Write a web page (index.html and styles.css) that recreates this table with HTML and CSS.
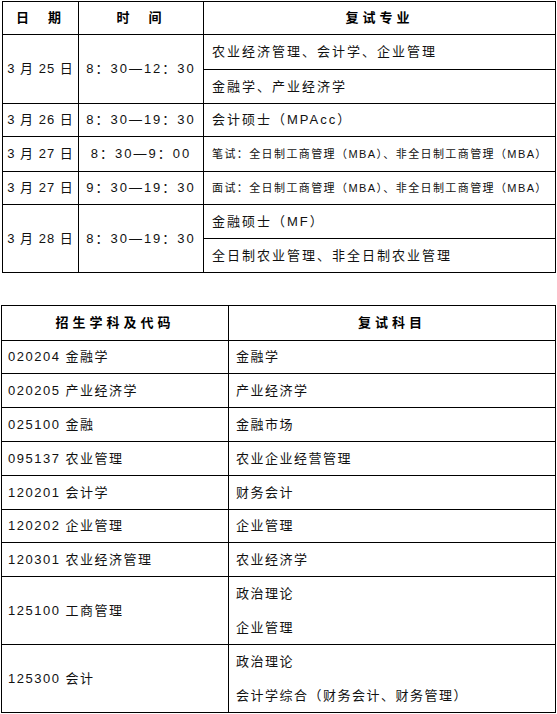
FILE: index.html
```html
<!DOCTYPE html>
<html lang="zh-CN">
<head>
<meta charset="utf-8">
<title>复试安排</title>
<link rel="stylesheet" href="styles.css">
</head>
<body>
<table class="tbl sched">
  <colgroup><col class="c-date"><col class="c-time"><col class="c-major"></colgroup>
  <tr class="head h33"><th>日&nbsp;&nbsp;期</th><th>时&nbsp;&nbsp;间</th><th>复试专业</th></tr>
  <tr class="h35"><td rowspan="2" class="ctr date">3 月 25 日</td><td rowspan="2" class="ctr">8：30—12：30</td><td>农业经济管理、会计学、企业管理</td></tr>
  <tr class="h34"><td>金融学、产业经济学</td></tr>
  <tr class="h33"><td class="ctr date">3 月 26 日</td><td class="ctr">8：30—19：30</td><td>会计硕士（MPAcc）</td></tr>
  <tr class="h35"><td class="ctr date">3 月 27 日</td><td class="ctr">8：30—9：00</td><td class="small">笔试：全日制工商管理（MBA）、非全日制工商管理（MBA）</td></tr>
  <tr class="h33"><td class="ctr date">3 月 27 日</td><td class="ctr">9：30—19：30</td><td class="small">面试：全日制工商管理（MBA）、非全日制工商管理（MBA）</td></tr>
  <tr class="h34"><td rowspan="2" class="ctr date">3 月 28 日</td><td rowspan="2" class="ctr">8：30—19：30</td><td>金融硕士（MF）</td></tr>
  <tr class="h34"><td>全日制农业管理、非全日制农业管理</td></tr>
</table>

<table class="tbl subj">
  <colgroup><col class="c-code"><col class="c-exam"></colgroup>
  <tr class="head h35"><th>招生学科及代码</th><th>复试科目</th></tr>
  <tr class="h33"><td>020204 金融学</td><td>金融学</td></tr>
  <tr class="h34"><td>020205 产业经济学</td><td>产业经济学</td></tr>
  <tr class="h34"><td>025100 金融</td><td>金融市场</td></tr>
  <tr class="h34"><td>095137 农业管理</td><td>农业企业经营管理</td></tr>
  <tr class="h34"><td>120201 会计学</td><td>财务会计</td></tr>
  <tr class="h33"><td>120202 企业管理</td><td>企业管理</td></tr>
  <tr class="h34"><td>120301 农业经济管理</td><td>农业经济学</td></tr>
  <tr class="h67"><td>125100 工商管理</td><td class="multi">政治理论<br>企业管理</td></tr>
  <tr class="h68"><td>125300 会计</td><td class="multi">政治理论<br>会计学综合（财务会计、财务管理）</td></tr>
</table>
</body>
</html>
```

FILE: styles.css
```css
html, body {
  margin: 0;
  padding: 0;
  background: #fff;
}

body {
  font-family: "Liberation Sans", "Noto Sans CJK SC", sans-serif;
  font-size: 13px;
  color: #111;
}

.tbl {
  border-collapse: collapse;
  table-layout: fixed;
}

.tbl th,
.tbl td {
  border: 1px solid #000;
  padding: 0;
  vertical-align: middle;
  white-space: nowrap;
  line-height: 16px;
}

.tbl th {
  font-weight: bold;
  text-align: center;
  letter-spacing: 4px;
  color: #000;
}

.h33 { height: 33px; }
.h34 { height: 34px; }
.h35 { height: 35px; }
.h67 { height: 67px; }
.h68 { height: 68px; }

/* schedule table */
.sched {
  margin: 1px 0 0 2px;
  width: 553px;
  letter-spacing: 2px;
}

.sched .c-date { width: 76px; }
.sched .c-time { width: 125px; }
.sched .c-major { width: 352px; }

.sched td { padding-left: 8px; }

.sched td.ctr {
  text-align: center;
  padding-left: 0;
}

.sched td.date {
  letter-spacing: 1px;
}

.sched td.small {
  font-size: 11px;
  letter-spacing: 1.4px;
}

/* subject table */
.subj {
  margin: 32px 0 0 1px;
  width: 554px;
  letter-spacing: 1.5px;
}

.subj .c-code { width: 227px; }
.subj .c-exam { width: 327px; }

.subj td { padding-left: 6px; }
.subj td + td { padding-left: 7px; }

.subj td.multi {
  line-height: 33.5px;
}
```
